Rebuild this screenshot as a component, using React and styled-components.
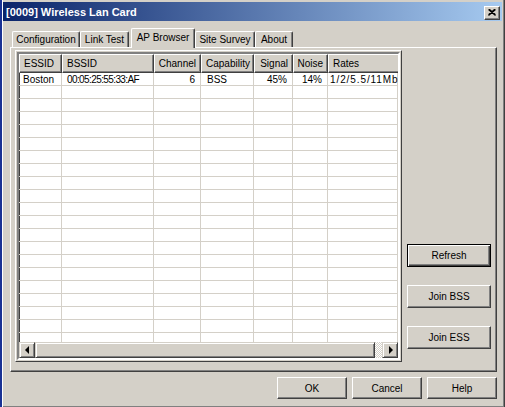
import React from 'react'
import styled, { createGlobalStyle } from 'styled-components'

const Global = createGlobalStyle`
  html, body { margin: 0; padding: 0; background: #d4d0c8; }
  * { box-sizing: border-box; }
`

const face = '#d4d0c8'
const raised = `
  border: 1px solid;
  border-color: #ffffff #404040 #404040 #ffffff;
  box-shadow: inset -1px -1px #808080;
`

const Window = styled.div`
  width: 505px;
  height: 407px;
  background: ${face};
  border-left: 2px solid #1a3294;
  box-shadow: inset 1px 0 #ffffff, inset -1px 0 #404040, inset -2px 0 #808080, inset 0 -1px #808080;
  font-family: "Liberation Sans", Arial, sans-serif;
  font-size: 10px;
  color: #000;
  display: flex;
  flex-direction: column;
  overflow: hidden;
`
const TitleBar = styled.div`
  height: 19px;
  margin: 2px 3px 0 1px;
  background: linear-gradient(to right, #0a246a, #a6caf0);
  display: flex;
  align-items: center;
  justify-content: space-between;
  padding: 0 2px 0 3px;
`
const Title = styled.span`
  color: #fff;
  font-weight: bold;
  font-size: 11px;
  white-space: nowrap;
`
const CloseBtn = styled.div`
  width: 16px;
  height: 14px;
  background: ${face};
  ${raised}
  display: flex;
  align-items: center;
  justify-content: center;
  margin-top: 2px;
`
const Body = styled.div`
  padding: 6px 0 0 8px;
  display: flex;
  flex-direction: column;
`
const TabRow = styled.div`
  height: 20px;
  display: flex;
  align-items: flex-end;
  padding-left: 2px;
  position: relative;
  z-index: 1;
`
const Tab = styled.div`
  width: ${p => p.$w}px;
  height: ${p => (p.$active ? 20 : 16)}px;
  margin-left: ${p => p.$ml || 0}px;
  margin-bottom: ${p => (p.$active ? -1 : 0)}px;
  padding-bottom: ${p => (p.$active ? 3 : 0)}px;
  background: ${face};
  border-top: 1px solid #fff;
  border-left: 1px solid #fff;
  border-right: 1px solid #404040;
  box-shadow: inset -1px 0 #808080;
  border-radius: 2px 2px 0 0;
  display: flex;
  align-items: center;
  justify-content: center;
  white-space: nowrap;
`
const Panel = styled.div`
  width: 487px;
  height: 325px;
  border: 1px solid;
  border-color: #fff #404040 #404040 #fff;
  box-shadow: inset -1px -1px #808080;
  display: flex;
  align-items: flex-start;
  padding: 2px 0 0 4px;
`
const Frame = styled.div`
  width: 387px;
  height: 312px;
  border: 1px solid;
  border-color: #fff #404040 #404040 #fff;
  padding: 1px;
`
const List = styled.div`
  width: 100%;
  height: 100%;
  border: 2px solid;
  border-color: #808080 #ffffff #ffffff #808080;
  box-shadow: inset 1px 1px #404040, inset -1px -1px ${face};
  background: #fff;
  display: flex;
  flex-direction: column;
  overflow: hidden;
`
const Client = styled.div`
  flex: 1;
  display: flex;
  flex-direction: column;
  overflow: hidden;
`
const cols = '43px 92px 47px 53px 39px 35px 100px'
const HeaderRow = styled.div`
  display: grid;
  grid-template-columns: ${cols};
  height: 19px;
  flex: none;
`
const HeadCell = styled.div`
  background: ${face};
  ${raised}
  display: flex;
  align-items: center;
  justify-content: ${p => (p.$right ? 'flex-end' : 'flex-start')};
  padding: 0 4px;
  white-space: nowrap;
  overflow: hidden;
`
const Rows = styled.div`
  flex: 1;
  overflow: hidden;
`
const Row = styled.div`
  display: grid;
  grid-template-columns: ${cols};
  height: 13px;
`
const Cell = styled.div`
  border-right: 1px solid #d4d0c8;
  border-bottom: 1px solid #d4d0c8;
  display: flex;
  align-items: center;
  justify-content: ${p => (p.$right ? 'flex-end' : 'flex-start')};
  padding: 0 ${p => (p.$right ? 5 : 0)}px 0 ${p => (p.$pl ?? 4)}px;
  white-space: nowrap;
  overflow: hidden;
  letter-spacing: ${p => p.$ls || 0}px;
`
const ScrollBar = styled.div`
  height: 16px;
  flex: none;
  display: flex;
  background: repeating-conic-gradient(#ffffff 0 25%, ${face} 0 50%) 0 0 / 2px 2px;
`
const ArrowBtn = styled.div`
  width: 16px;
  height: 16px;
  flex: none;
  background: ${face};
  border: 1px solid;
  border-color: ${face} #404040 #404040 ${face};
  box-shadow: inset 1px 1px #fff, inset -1px -1px #808080;
  display: flex;
  align-items: center;
  justify-content: center;
`
const Arrow = styled.div`
  width: 0;
  height: 0;
  border-top: 4px solid transparent;
  border-bottom: 4px solid transparent;
  ${p => (p.$dir === 'left' ? 'border-right: 4px solid #000; margin-right: 1px;' : 'border-left: 4px solid #000; margin-left: 1px;')}
`
const Thumb = styled.div`
  width: 340px;
  height: 16px;
  background: ${face};
  border: 1px solid;
  border-color: ${face} #404040 #404040 ${face};
  box-shadow: inset 1px 1px #fff, inset -1px -1px #808080;
`
const Track = styled.div`
  flex: 1;
`
const SideCol = styled.div`
  display: flex;
  flex-direction: column;
  gap: 18px;
  padding-top: 194px;
  margin-left: 5px;
`
const Button = styled.div`
  width: ${p => p.$w}px;
  height: ${p => p.$h}px;
  background: ${face};
  border: 1px solid;
  border-color: ${p => (p.$def ? '#000' : '#fff #404040 #404040 #fff')};
  box-shadow: ${p =>
    p.$def
      ? 'inset 1px 1px #fff, inset -1px -1px #404040, inset -2px -2px #808080'
      : 'inset -1px -1px #808080'};
  display: flex;
  align-items: center;
  justify-content: center;
  white-space: nowrap;
`
const Footer = styled.div`
  width: 487px;
  display: flex;
  justify-content: flex-end;
  gap: 5px;
  margin-top: 5px;
`

const headers = [
  ['ESSID'], ['BSSID'], ['Channel', true], ['Capability'], ['Signal', true], ['Noise', true], ['Rates'],
]

export default function App() {
  const empty = Array.from({ length: 20 })
  return (
    <Window>
      <Global />
      <TitleBar>
        <Title>[0009] Wireless Lan Card</Title>
        <CloseBtn>
          <svg width="8" height="7" viewBox="0 0 8 7">
            <path d="M0.5 0.5 L7.5 6.5 M7.5 0.5 L0.5 6.5 M1.5 0.5 L7.5 5.8 M6.5 0.5 L0.5 5.8" stroke="#000" strokeWidth="1.2" fill="none" />
          </svg>
        </CloseBtn>
      </TitleBar>
      <Body>
        <TabRow>
          <Tab $w={68}>Configuration</Tab>
          <Tab $w={49}>Link Test</Tab>
          <Tab $w={64} $ml={2} $active>AP Browser</Tab>
          <Tab $w={60}>Site Survey</Tab>
          <Tab $w={38}>About</Tab>
        </TabRow>
        <Panel>
          <Frame>
            <List>
              <Client>
                <HeaderRow>
                  {headers.map(([h, r]) => (
                    <HeadCell key={h} $right={r}>{h}</HeadCell>
                  ))}
                </HeaderRow>
                <Rows>
                  <Row>
                    <Cell>Boston</Cell>
                    <Cell $pl={5} $ls={-0.6}>00:05:25:55:33:AF</Cell>
                    <Cell $right>6</Cell>
                    <Cell $pl={6}>BSS</Cell>
                    <Cell $right>45%</Cell>
                    <Cell $right>14%</Cell>
                    <Cell $pl={2} $ls={0.9}>1/2/5.5/11Mbps</Cell>
                  </Row>
                  {empty.map((_, i) => (
                    <Row key={i}>
                      {headers.map(([h]) => <Cell key={h} />)}
                    </Row>
                  ))}
                </Rows>
                <ScrollBar>
                  <ArrowBtn><Arrow $dir="left" /></ArrowBtn>
                  <Thumb />
                  <Track />
                  <ArrowBtn><Arrow $dir="right" /></ArrowBtn>
                </ScrollBar>
              </Client>
            </List>
          </Frame>
          <SideCol>
            <Button $w={84} $h={23} $def>Refresh</Button>
            <Button $w={84} $h={23}>Join BSS</Button>
            <Button $w={84} $h={23}>Join ESS</Button>
          </SideCol>
        </Panel>
        <Footer>
          <Button $w={70} $h={22}>OK</Button>
          <Button $w={70} $h={22}>Cancel</Button>
          <Button $w={70} $h={22}>Help</Button>
        </Footer>
      </Body>
    </Window>
  )
}
